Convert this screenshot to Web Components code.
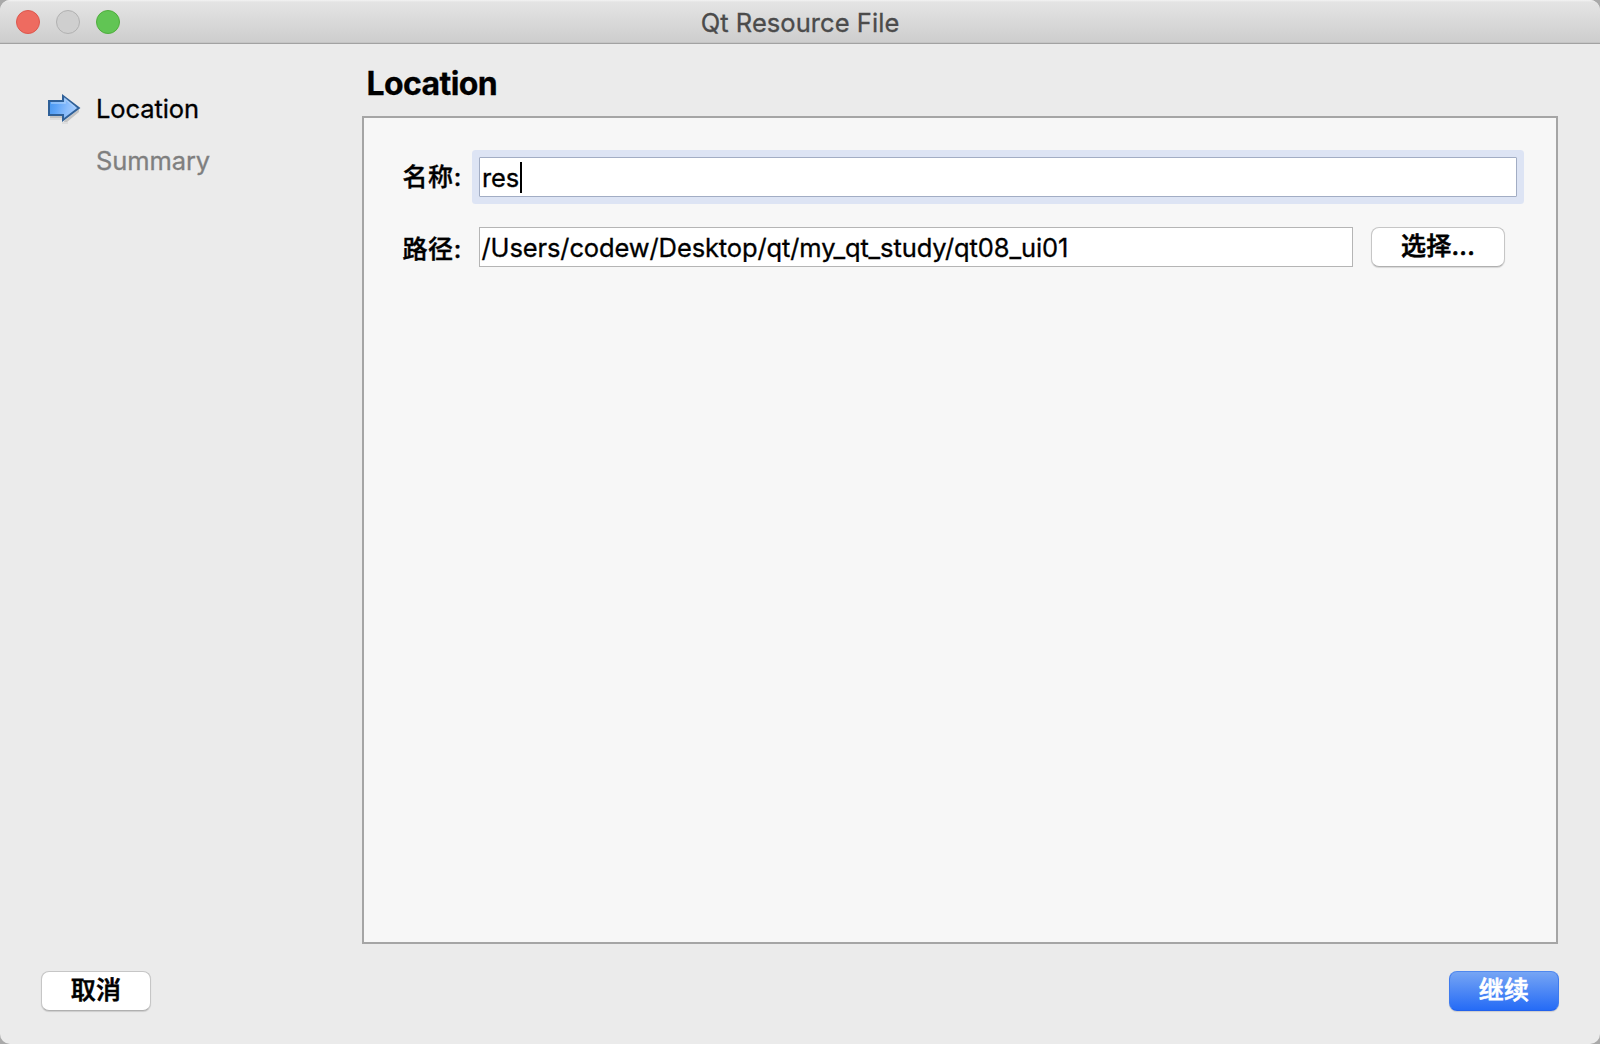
<!DOCTYPE html>
<html lang="zh-CN">
<head>
<meta charset="utf-8">
<title>Qt Resource File</title>
<style>
html,body{margin:0;height:100%;background:#a9a9a9;overflow:hidden}
body{font-family:Inter,"Noto Sans CJK SC",sans-serif;font-size:25.5px;color:#000;-webkit-text-stroke:.3px currentColor}
</style>
</head>
<body>
<wizard-window></wizard-window>
<script>
const define=(name,html)=>customElements.define(name,class extends HTMLElement{
  constructor(){super();this.attachShadow({mode:'open'}).innerHTML=html;}
});

define('title-bar',`<style>
:host{display:flex;box-sizing:border-box;height:44px;padding:0 16px;align-items:center;background:linear-gradient(#f3f3f3 0,#e4e4e4 2px,#cdcdcd 100%);border-bottom:1px solid #a2a2a2;box-shadow:inset 0 -1px #c4c4c4}
.lights{display:flex;gap:16px;flex:1}
i{width:24px;height:24px;border-radius:50%;box-sizing:border-box;border:1px solid #b1b1b1;background:#cfcfcf}
.close{background:#ee6b60;border-color:#dc574d}
.zoom{background:#61c554;border-color:#4fad3d}
.title{color:#4b4b4b;letter-spacing:.06px;line-height:44px;padding-top:2px}
.rest{flex:1}
</style><div class="lights"><i class="close"></i><i></i><i class="zoom"></i></div><span class="title"><slot></slot></span><div class="rest"></div>`);

define('step-arrow',`<style>:host{display:block;width:34px;height:30px;padding-top:1px}svg{display:block}</style>
<svg width="34" height="30" viewBox="0 0 34 30">
<defs><linearGradient id="g" x1="0" x2="1" y1=".2" y2=".4"><stop stop-color="#4596ef"/><stop offset=".3" stop-color="#5fa5f8"/><stop offset=".65" stop-color="#8bbdfc"/><stop offset="1" stop-color="#a9cffd"/></linearGradient></defs>
<path d="M2 22h13v2H2zM16 27L31 15v3L19 28h-3z" fill="#000" opacity=".17"/>
<path d="M2 24h12v2H2zM14 28h6v2h-6z" fill="#000" opacity=".06"/>
<path d="M1 7h14V2L30.8 14 15 26v-5H1z" fill="url(#g)" stroke="#2f6098" stroke-width="2"/>
<path d="M3 9h14V5l10 8" fill="none" stroke="#b0d3fb" stroke-width="1.6" opacity=".75"/>
</svg>`);

define('wizard-step',`<style>
:host{display:flex;height:52px;align-items:center;color:#7f7f7f;letter-spacing:-.1px}
:host([current]){color:#000}
.mark{width:48px;flex:none}
</style><div class="mark"><slot name="icon"></slot></div><span><slot></slot></span>`);

define('text-field',`<style>
:host{display:flex;align-items:center;box-sizing:border-box;height:40px;border:1px solid #b5b5b5;background:#fff;padding:1px 0 0 1.5px;letter-spacing:-.12px}
:host([focused]){border-color:#a2adc4;outline:7px solid #dde4f4;padding-left:2px}
:host([focused]){outline:none;box-shadow:0 0 0 7px #dde4f4;border-radius:1px}
.caret{display:none;width:2px;height:31px;background:#000;margin-left:.5px}
:host([focused]) .caret{display:block}
</style><span><slot></slot></span><i class="caret"></i>`);

define('push-button',`<style>
:host{display:flex;box-sizing:border-box;width:110px;height:40px;align-items:center;justify-content:center;border-radius:8px;border:1px solid #c6c6c6;border-bottom-color:#b0b0b0;background:#fff;box-shadow:0 1px 1px #0002;font-weight:500;font-size:25px;letter-spacing:.3px;-webkit-text-stroke:.6px currentColor;line-height:36px;padding-bottom:2px}
:host([primary]){color:#fff;background:linear-gradient(#76a5f4,#256bf6);border-color:#4f88ee #3f7bee #2161ec}
</style><span><slot></slot></span>`);

define('form-row',`<style>
:host{display:flex;align-items:center;height:40px}
.label{width:77px;flex:none;font-weight:500;font-size:25px;letter-spacing:.6px;-webkit-text-stroke:.4px currentColor;line-height:40px;padding:var(--label-drop,0px) 0 0 .5px;box-sizing:border-box}
.body{display:flex;flex:1;gap:18px}
::slotted(text-field){flex:1}
::slotted(push-button){width:134px}
</style><span class="label"><slot name="label"></slot></span><div class="body"><slot></slot></div>`);

define('wizard-page',`<style>
:host{display:flex;flex-direction:column;height:100%}
h1{margin:0;height:72px;box-sizing:border-box;padding:14px 0 0 4.5px;font-size:32px;line-height:52px;font-weight:700;letter-spacing:-.6px}
.panel{flex:1;box-sizing:border-box;border:2px solid #a5a5a5;background:#f7f7f7;padding:39px 39px 0 38px;display:flex;flex-direction:column;gap:30px}
.narrow{margin-right:12px;--label-drop:3px}
</style><h1>Location</h1><div class="panel">
<form-row><span slot="label">名称:</span><text-field focused>res</text-field></form-row>
<form-row class="narrow"><span slot="label">路径:</span><text-field>/Users/codew/Desktop/qt/my_qt_study/qt08_ui01</text-field><push-button>选择...</push-button></form-row>
</div>`);

define('wizard-window',`<style>
:host{display:flex;flex-direction:column;width:1600px;height:1044px;background:#ebebeb;border-radius:10px;overflow:hidden}
.main{display:flex;height:900px}
.steps{width:314px;padding:38px 0 0 48px}
wizard-page{width:1196px}
.actions{display:flex;justify-content:space-between;padding:27px 41px 0}
</style><title-bar>Qt Resource File</title-bar>
<div class="main"><div class="steps"><wizard-step current><step-arrow slot="icon"></step-arrow>Location</wizard-step><wizard-step>Summary</wizard-step></div><wizard-page></wizard-page></div>
<div class="actions"><push-button>取消</push-button><push-button primary>继续</push-button></div>`);
</script>
</body>
</html>
